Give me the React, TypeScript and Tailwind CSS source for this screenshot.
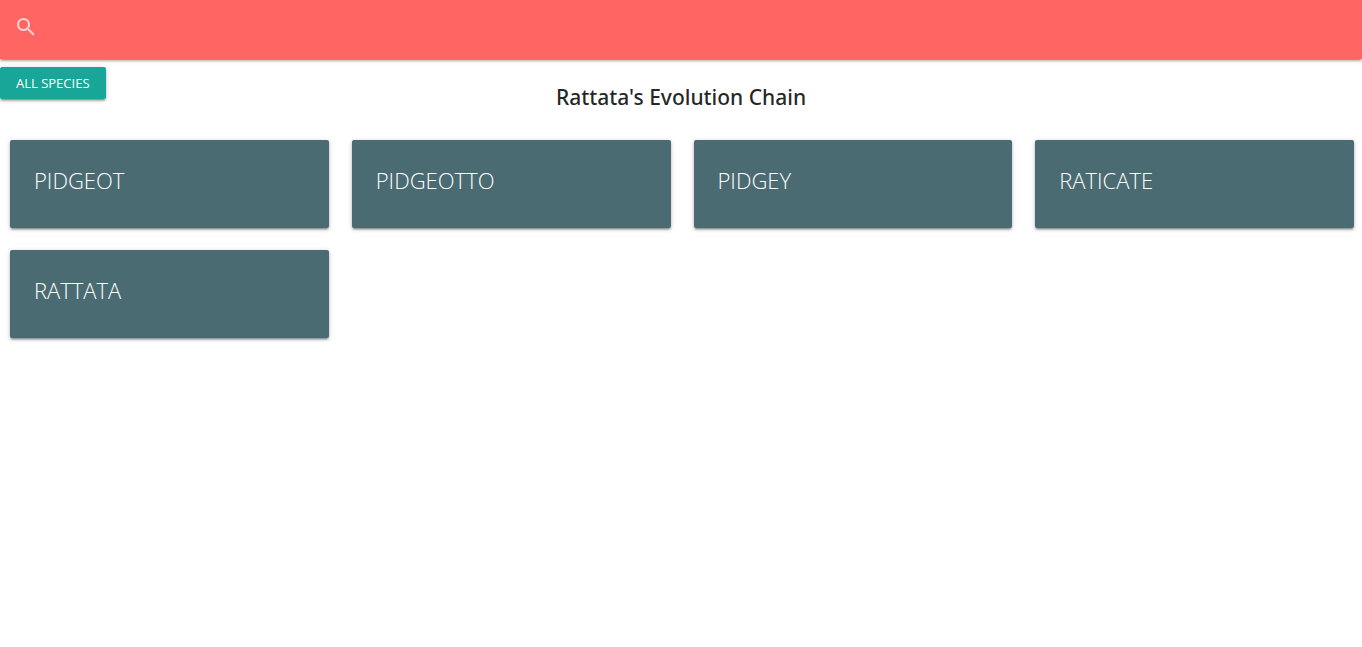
const species = ["PIDGEOT", "PIDGEOTTO", "PIDGEY", "RATICATE", "RATTATA"];

const elevation =
  "shadow-[0_2px_2px_0_rgba(0,0,0,0.2),0_3px_1px_-2px_rgba(0,0,0,0.16),0_1px_5px_0_rgba(0,0,0,0.2)]";

function SearchBar() {
  return (
    <nav className={`relative bg-[#ff6663] ${elevation}`}>
      <form role="search" className="flex h-[59px] items-center pb-[5px] pl-[14px]">
        <label htmlFor="search" aria-label="Search" className="shrink-0">
          <svg viewBox="0 0 24 24" className="size-6 fill-white/70" aria-hidden="true">
            <path d="M15.5 14h-.79l-.28-.27C15.41 12.59 16 11.11 16 9.5 16 5.91 13.09 3 9.5 3S3 5.91 3 9.5 5.91 16 9.5 16c1.61 0 3.09-.59 4.23-1.57l.27.28v.79l5 4.99L20.49 19l-4.99-5zm-6 0C7.01 14 5 11.99 5 9.5S7.01 5 9.5 5 14 7.01 14 9.5 11.99 14 9.5 14z" />
          </svg>
        </label>
        <input
          id="search"
          type="search"
          className="h-full min-w-0 flex-1 bg-transparent px-4 text-lg text-white outline-none"
        />
      </form>
    </nav>
  );
}

function SpeciesCard({ name }: { name: string }) {
  return (
    <a
      href="#"
      className={`block rounded-xs bg-[#4b6b72] px-6 pt-6 pb-8 text-[22px] leading-8 font-light text-white ${elevation}`}
    >
      {name}
    </a>
  );
}

export default function App() {
  return (
    <div className="min-h-screen bg-white font-['Open_Sans','Noto_Sans',sans-serif] text-black/87">
      <SearchBar />
      <main className="pt-2">
        <div className="grid grid-cols-[1fr_auto_1fr] items-start">
          <button
            type="button"
            className={`h-8 justify-self-start rounded-xs bg-[#17a697] px-4 pt-0.5 text-[13px] text-white ${elevation}`}
          >
            ALL SPECIES
          </button>
          <h1 className="pt-3 font-['Noto_Sans',sans-serif] text-[21px] leading-9 font-medium">
            Rattata's Evolution Chain
          </h1>
        </div>
        <div className="grid grid-cols-4 gap-x-[23px] gap-y-[22px] pt-[25px] pr-2 pb-6 pl-[10px]">
          {species.map((name) => (
            <SpeciesCard key={name} name={name} />
          ))}
        </div>
      </main>
    </div>
  );
}
